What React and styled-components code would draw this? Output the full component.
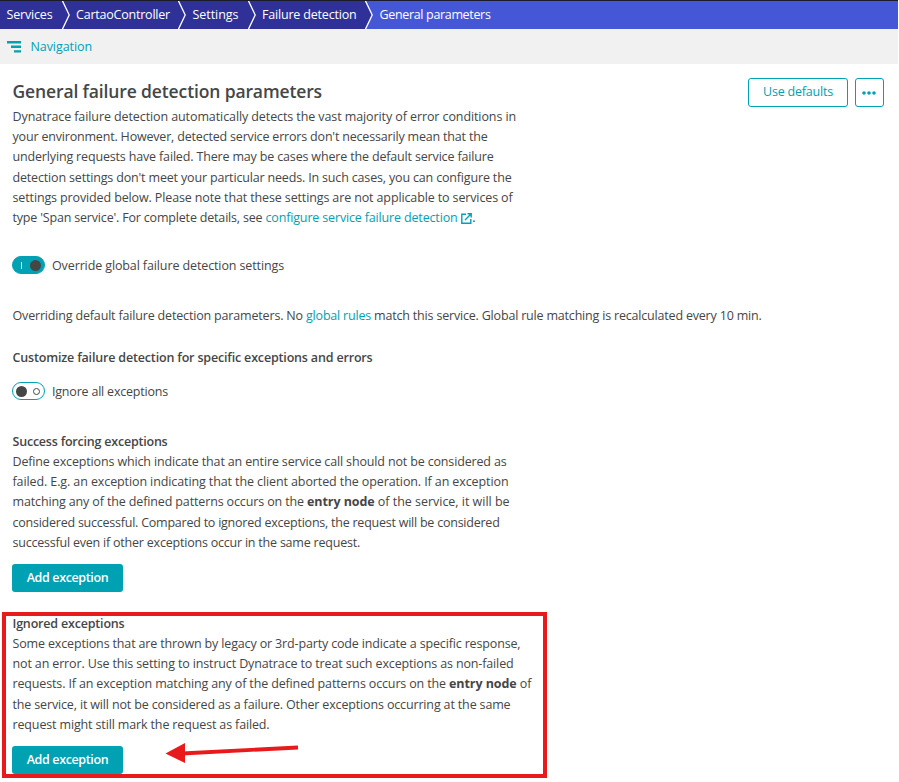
import React from "react";
import styled, { createGlobalStyle, css } from "styled-components";

const teal = "#00a1b2";
const red = "#e91a1c";

const GlobalStyle = createGlobalStyle`
  * { box-sizing: border-box; }
  body {
    margin: 0;
    background: #fff;
    color: #454646;
    font: 12.5px/20.2px "Open Sans", "Noto Sans", sans-serif;
    overflow: hidden;
  }
`;

const Page = styled.div`
  position: relative;
  width: 899px;
  height: 782px;
  display: flex;
  flex-direction: column;
`;

const Breadcrumbs = styled.nav`
  display: flex;
  flex: none;
  height: 29px;
  width: 898px;
  border-top: 1px solid #1c1c28;
  background: #4556d7;
  color: #fff;
`;

const Crumb = styled.a`
  display: flex;
  flex: none;
  align-items: center;
  width: ${(p) => p.$width}px;
  padding: 1px 0 0 6.5px;
  white-space: nowrap;
  letter-spacing: ${(p) => p.$track}px;
  background: ${(p) => (p.$current ? "transparent" : "#2f3199")};
`;

const SeparatorIcon = styled.svg`
  flex: none;
  width: 8px;
  height: 28px;
`;

const NavigationBar = styled.div`
  display: flex;
  flex: none;
  align-items: center;
  gap: 9.5px;
  width: 898px;
  height: 35px;
  padding: 1px 0 0 7px;
  background: #f1f1f1;
  color: ${teal};
`;

const Content = styled.main`
  flex: 1;
  display: flex;
  flex-direction: column;
  align-items: flex-start;
  padding: 14px 14px 0 12px;
`;

const Header = styled.header`
  display: flex;
  justify-content: space-between;
  align-items: flex-start;
  width: 872px;
  height: 29px;
`;

const Title = styled.h1`
  margin: 0 0 0 0.5px;
  font-size: 17.5px;
  line-height: 26px;
  font-weight: 600;
  letter-spacing: -0.128px;
`;

const Actions = styled.div`
  display: flex;
  gap: 7px;
`;

const OutlineButton = styled.button`
  display: flex;
  align-items: center;
  justify-content: center;
  width: ${(p) => p.$width}px;
  height: 29px;
  padding: 0;
  border: 1px solid ${teal};
  border-radius: 3px;
  background: #fff;
  color: ${teal};
  font: inherit;
  letter-spacing: -0.2px;
  ${(p) => p.$icon && css`padding: 0 1px 0 0;`}
`;

const PrimaryButton = styled.button`
  flex: none;
  width: 111px;
  height: 28px;
  margin-top: ${(p) => p.$top}px;
  padding: 0 0 1px;
  border: 0;
  border-radius: 3px;
  background: ${teal};
  color: #fff;
  font: inherit;
  font-weight: 600;
  letter-spacing: -0.37px;
`;

const Paragraph = styled.p`
  margin: ${(p) => p.$top || 0}px 0 0 0.5px;
`;

const Line = styled.span`
  display: block;
  white-space: pre;
`;

const Run = styled.span`
  white-space: pre;
  letter-spacing: ${(p) => p.$track}px;
`;

const Link = styled.a`
  color: ${teal};
  letter-spacing: ${(p) => p.$track}px;
`;

const Strong = styled.strong`
  font-weight: 700;
  letter-spacing: -0.08px;
`;

const SectionTitle = styled.h2`
  margin: ${(p) => p.$top}px 0 0 0.5px;
  font-size: 12.5px;
  line-height: 20px;
  font-weight: 600;
  letter-spacing: ${(p) => p.$track}px;
`;

const SwitchRow = styled.label`
  display: flex;
  align-items: center;
  gap: 7px;
  height: 20px;
  margin-top: ${(p) => p.$top}px;
`;

const SwitchLabel = styled.span`
  padding-top: 2px;
  letter-spacing: ${(p) => p.$track}px;
`;

const Track = styled.span`
  display: flex;
  align-items: center;
  justify-content: space-between;
  flex-direction: ${(p) => (p.$on ? "row" : "row-reverse")};
  width: 33px;
  height: 18px;
  padding: ${(p) => (p.$on ? "0 3px 0 8px" : "0 4px 0 3px")};
  border: 1px solid ${teal};
  border-radius: 9px;
  background: ${(p) => (p.$on ? teal : "#fff")};
`;

const Knob = styled.span`
  width: 11px;
  height: 11px;
  border-radius: 50%;
  background: #454646;
`;

const OnMark = styled.span`
  width: 1px;
  height: 7px;
  background: #fff;
`;

const OffMark = styled.span`
  width: 7px;
  height: 7px;
  border: 1px solid #454646;
  border-radius: 50%;
`;

const ExternalIcon = styled.svg`
  margin: 0 0 -1.5px 0.5px;
`;

const Highlight = styled.div`
  position: absolute;
  left: 2px;
  top: 612px;
  width: 544.5px;
  height: 166px;
  border: 4px solid ${red};
`;

const Arrow = styled.svg`
  position: absolute;
  left: 160px;
  top: 738px;
`;

function Separator({ last }) {
  return (
    <SeparatorIcon viewBox="0 0 8 28">
      <path d="M0 0H8V28H0Z" fill={last ? "#4556d7" : "#2f3199"} />
      <path d="M0 0L7 14L0 28Z" fill="#2f3199" />
      <path d="M0.3 -0.5L7.2 14L0.3 28.5" fill="none" stroke="#fff" strokeWidth="1.3" />
    </SeparatorIcon>
  );
}

function Text({ lines }) {
  return lines.map(([text, track]) => (
    <Line key={text}>
      <Run $track={track}>{text}</Run>
    </Line>
  ));
}

const crumbs = [
  ["Services", 61.5, -0.169],
  ["CartaoController", 108.5, -0.214],
  ["Settings", 61.5, -0.045],
  ["Failure detection", 109.5, -0.187],
];

const intro = [
  ["Dynatrace failure detection automatically detects the vast majority of error conditions in", -0.096],
  ["your environment. However, detected service errors don't necessarily mean that the", -0.185],
  ["underlying requests have failed. There may be cases where the default service failure", -0.161],
  ["detection settings don't meet your particular needs. In such cases, you can configure the", -0.167],
  ["settings provided below. Please note that these settings are not applicable to services of", -0.127],
];

export default function App() {
  return (
    <>
      <GlobalStyle />
      <Page>
        <Breadcrumbs>
          {crumbs.map(([label, width, track], i) => (
            <React.Fragment key={label}>
              <Crumb $width={width} $track={track}>{label}</Crumb>
              <Separator last={i === crumbs.length - 1} />
            </React.Fragment>
          ))}
          <Crumb $current $width={150} $track={-0.335}>General parameters</Crumb>
        </Breadcrumbs>

        <NavigationBar>
          <svg width="14" height="12" viewBox="0 0 14 12" fill={teal}>
            <path d="M0 0H14V2.4H0ZM4 4.6H14V7H4ZM7 9.2H14V11.6H7Z" />
          </svg>
          <Run $track={-0.079}>Navigation</Run>
        </NavigationBar>

        <Content>
          <Header>
            <Title>General failure detection parameters</Title>
            <Actions>
              <OutlineButton $width={100}>Use defaults</OutlineButton>
              <OutlineButton $width={29} $icon aria-label="More">
                <svg width="14" height="4" viewBox="0 0 14 4" fill={teal}>
                  <circle cx="2" cy="2" r="1.8" />
                  <circle cx="7" cy="2" r="1.8" />
                  <circle cx="12" cy="2" r="1.8" />
                </svg>
              </OutlineButton>
            </Actions>
          </Header>

          <Paragraph>
            <Text lines={intro} />
            <Line>
              <Run $track={-0.181}>{"type 'Span service'. For complete details, see "}</Run>
              <Link $track={-0.158}>configure service failure detection</Link>{" "}
              <ExternalIcon width="11" height="11" viewBox="0 0 11 11" fill="none" stroke={teal} strokeWidth="1.4">
                <path d="M5 1.2H0.8V10.2H9.8V6" />
                <path d="M6.5 0.8H10.2V4.5M10 1L4 7" />
              </ExternalIcon>
              .
            </Line>
          </Paragraph>

          <SwitchRow $top={27}>
            <Track $on><OnMark /><Knob /></Track>
            <SwitchLabel $track={-0.116}>Override global failure detection settings</SwitchLabel>
          </SwitchRow>

          <Paragraph $top={31}>
            <Run $track={-0.17}>{"Overriding default failure detection parameters. No "}</Run>
            <Link $track={-0.197}>global rules</Link>
            <Run $track={-0.188}>{" match this service. Global rule matching is recalculated every 10 min."}</Run>
          </Paragraph>

          <SectionTitle $top={22} $track={-0.168}>
            Customize failure detection for specific exceptions and errors
          </SectionTitle>

          <SwitchRow $top={13}>
            <Track><OffMark /><Knob /></Track>
            <SwitchLabel $track={-0.206}>Ignore all exceptions</SwitchLabel>
          </SwitchRow>

          <SectionTitle $top={30.6} $track={-0.215}>Success forcing exceptions</SectionTitle>
          <Paragraph>
            <Text
              lines={[
                ["Define exceptions which indicate that an entire service call should not be considered as", -0.151],
                ["failed. E.g. an exception indicating that the client aborted the operation. If an exception", -0.104],
              ]}
            />
            <Line>
              <Run $track={-0.134}>{"matching any of the defined patterns occurs on the "}</Run>
              <Strong>entry node</Strong>
              <Run $track={-0.019}>{" of the service, it will be"}</Run>
            </Line>
            <Text
              lines={[
                ["considered successful. Compared to ignored exceptions, the request will be considered", -0.235],
                ["successful even if other exceptions occur in the same request.", -0.213],
              ]}
            />
          </Paragraph>
          <PrimaryButton $top={11.4}>Add exception</PrimaryButton>

          <SectionTitle $top={21.6} $track={-0.184}>Ignored exceptions</SectionTitle>
          <Paragraph>
            <Text
              lines={[
                ["Some exceptions that are thrown by legacy or 3rd-party code indicate a specific response,", -0.15],
                ["not an error. Use this setting to instruct Dynatrace to treat such exceptions as non-failed", -0.139],
              ]}
            />
            <Line>
              <Run $track={-0.146}>{"requests. If an exception matching any of the defined patterns occurs on the "}</Run>
              <Strong>entry node</Strong>
              <Run $track={-0.1}>{" of"}</Run>
            </Line>
            <Text
              lines={[
                ["the service, it will not be considered as a failure. Other exceptions occurring at the same", -0.151],
                ["request might still mark the request as failed.", -0.141],
              ]}
            />
          </Paragraph>
          <PrimaryButton $top={11.4}>Add exception</PrimaryButton>
        </Content>

        <Highlight />
        <Arrow width="140" height="30" viewBox="0 0 140 30">
          <path d="M22 15.5L138 9.5" stroke={red} strokeWidth="3.8" />
          <path d="M5.5 15.5L25 5V25Z" fill={red} />
        </Arrow>
      </Page>
    </>
  );
}
